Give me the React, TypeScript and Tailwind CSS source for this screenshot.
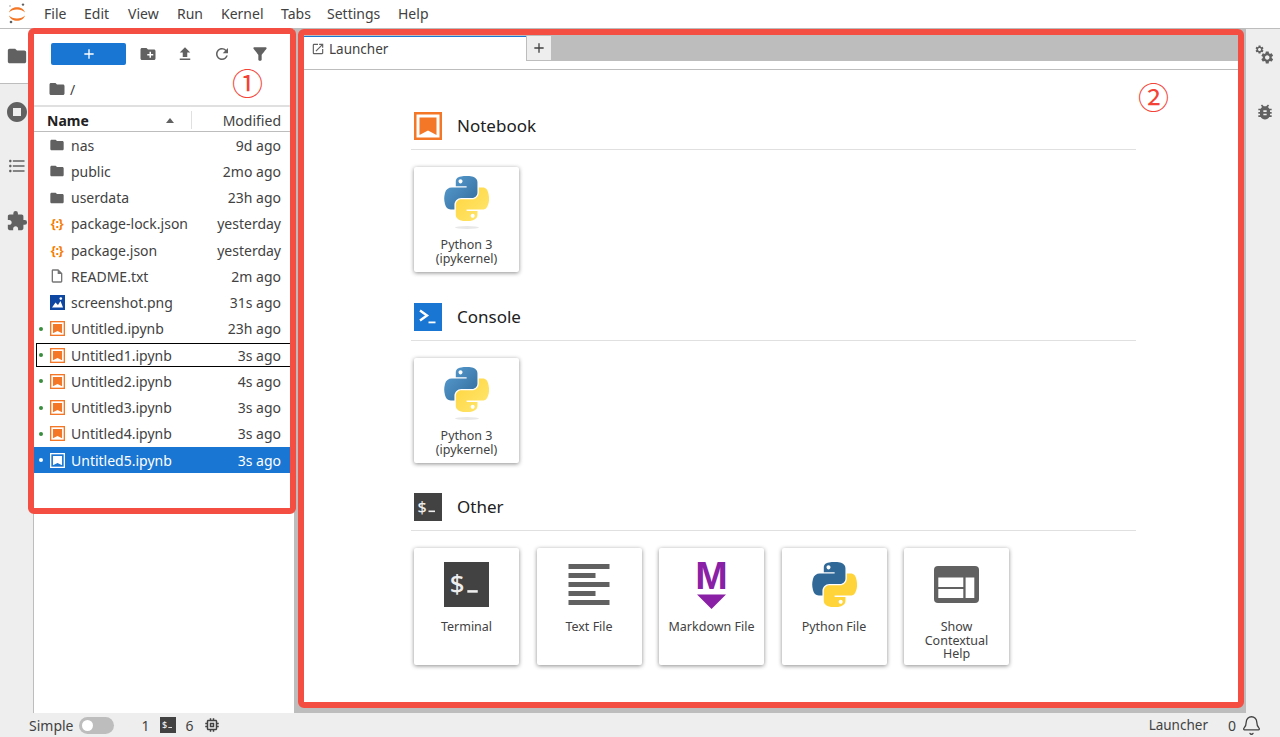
import * as React from "react"
import { Bell } from "lucide-react"
import {
    MdFolder,
    MdCreateNewFolder,
    MdFileUpload,
    MdRefresh,
    MdFilterAlt,
    MdStopCircle,
    MdFormatListBulleted,
    MdExtension,
    MdBugReport,
    MdOutlineInsertDriveFile,
    MdOutlineMemory,
    MdOutlineOpenInNew,
    MdAdd,
} from "react-icons/md"

const menuItems = [
    { label: "File", className: "w-[40px]" },
    { label: "Edit", className: "w-[44px]" },
    { label: "View", className: "w-[49px]" },
    { label: "Run", className: "w-[44px]" },
    { label: "Kernel", className: "w-[60px]" },
    { label: "Tabs", className: "w-[46px]" },
    { label: "Settings", className: "w-[71px]" },
    { label: "Help", className: "w-[40px]" },
]

type FileKind = "folder" | "json" | "text" | "image" | "notebook"

interface FileRow {
    name: string
    modified: string
    kind: FileKind
    running?: boolean
    focused?: boolean
    selected?: boolean
}

const files: FileRow[] = [
    { name: "nas", modified: "9d ago", kind: "folder" },
    { name: "public", modified: "2mo ago", kind: "folder" },
    { name: "userdata", modified: "23h ago", kind: "folder" },
    { name: "package-lock.json", modified: "yesterday", kind: "json" },
    { name: "package.json", modified: "yesterday", kind: "json" },
    { name: "README.txt", modified: "2m ago", kind: "text" },
    { name: "screenshot.png", modified: "31s ago", kind: "image" },
    { name: "Untitled.ipynb", modified: "23h ago", kind: "notebook", running: true },
    { name: "Untitled1.ipynb", modified: "3s ago", kind: "notebook", running: true, focused: true },
    { name: "Untitled2.ipynb", modified: "4s ago", kind: "notebook", running: true },
    { name: "Untitled3.ipynb", modified: "3s ago", kind: "notebook", running: true },
    { name: "Untitled4.ipynb", modified: "3s ago", kind: "notebook", running: true },
    { name: "Untitled5.ipynb", modified: "3s ago", kind: "notebook", running: true, selected: true },
]

const PY_BLUE =
    "M54.9 0C50.3 0 46 .4 42.1 1.1 30.8 3.1 28.7 7.3 28.7 15v10.2h26.8v3.4H18.6c-7.8 0-14.6 4.7-16.7 13.6-2.5 10.2-2.6 16.6 0 27.3 1.9 7.9 6.5 13.6 14.2 13.6h9.2V71c0-8.8 7.7-16.7 16.8-16.7h26.8c7.5 0 13.4-6.1 13.4-13.6V15.2c0-7.3-6.1-12.7-13.4-13.9C64.3.3 59.5 0 54.9 0Zm-14.5 8.2c2.8 0 5 2.3 5 5.1s-2.3 5.1-5 5.1-5-2.3-5-5.1 2.2-5.1 5-5.1Z"
const PY_YELLOW =
    "M85.6 28.7v11.9c0 9.2-7.8 17-16.7 17H42.1c-7.3 0-13.4 6.3-13.4 13.6v25.5c0 7.3 6.3 11.5 13.4 13.6 8.5 2.5 16.6 2.9 26.8 0 6.8-2 13.4-5.9 13.4-13.6V86.5H55.5v-3.4h40.2c7.8 0 10.7-5.4 13.4-13.6 2.8-8.4 2.7-16.5 0-27.3-1.9-7.8-5.6-13.6-13.4-13.6Zm-15.1 64.6c2.8 0 5 2.3 5 5.1s-2.3 5.1-5 5.1-5-2.3-5-5.1 2.3-5.1 5-5.1Z"
const GEAR =
    "M19.14 12.94c.04-.3.06-.61.06-.94 0-.32-.02-.64-.07-.94l2.03-1.58c.18-.14.23-.41.12-.61l-1.92-3.32c-.12-.22-.37-.29-.59-.22l-2.39.96c-.5-.38-1.03-.7-1.62-.94L14.4 2.81c-.04-.24-.24-.41-.48-.41h-3.84c-.24 0-.43.17-.47.41L9.25 5.35c-.59.24-1.13.57-1.62.94l-2.39-.96c-.22-.08-.47 0-.59.22L2.74 8.87c-.12.21-.08.47.12.61l2.03 1.58c-.05.3-.09.63-.09.94s.02.64.07.94l-2.03 1.58c-.18.14-.23.41-.12.61l1.92 3.32c.12.22.37.29.59.22l2.39-.96c.5.38 1.03.7 1.62.94l.36 2.54c.05.24.24.41.48.41h3.84c.24 0 .44-.17.47-.41l.36-2.54c.59-.24 1.13-.56 1.62-.94l2.39.96c.22.08.47 0 .59-.22l1.92-3.32c.12-.22.07-.47-.12-.61l-2.01-1.58ZM12 15.6c-1.98 0-3.6-1.62-3.6-3.6s1.62-3.6 3.6-3.6 3.6 1.62 3.6 3.6-1.62 3.6-3.6 3.6Z"

const PythonLogo = ({ gradient, id }: { gradient?: boolean; id: string }) => (
    <svg viewBox="0 0 110.4 111.4" className="h-[45px] w-[45px]">
        {gradient && (
            <defs>
                <linearGradient id={`${id}-b`} x1="0" y1="0" x2="1" y2="1">
                    <stop offset="0" stopColor="#5a9fd4" />
                    <stop offset="1" stopColor="#306998" />
                </linearGradient>
                <linearGradient id={`${id}-y`} x1="1" y1="1" x2="0" y2="0">
                    <stop offset="0" stopColor="#ffe873" />
                    <stop offset="1" stopColor="#ffd43b" />
                </linearGradient>
            </defs>
        )}
        <path d={PY_BLUE} fill={gradient ? `url(#${id}-b)` : "#306998"} />
        <path d={PY_YELLOW} fill={gradient ? `url(#${id}-y)` : "#ffd43b"} />
    </svg>
)

const NotebookIcon = ({ className, selected }: { className: string; selected?: boolean }) => (
    <svg viewBox="0 0 28 28" className={className}>
        <rect
            x="1.25"
            y="1.25"
            width="25.5"
            height="25.5"
            fill={selected ? "#1976d2" : "#fff"}
            stroke={selected ? "#fff" : "#f37726"}
            strokeWidth="2.5"
        />
        <path d="M5.5 5.5H22.5V23L14 18.5L5.5 23Z" fill={selected ? "#fff" : "#f37726"} />
    </svg>
)

const TerminalIcon = ({ className }: { className: string }) => (
    <svg viewBox="0 0 28 28" className={className}>
        <rect width="28" height="28" fill="#424242" />
        <text x="3.5" y="19.5" fontSize="16" fontWeight="500" fill="#eeeeee" fontFamily="Noto Sans, sans-serif">
            $
        </text>
        <rect x="14.5" y="17.5" width="6.5" height="1.6" fill="#eeeeee" />
    </svg>
)

const ConsoleIcon = () => (
    <svg viewBox="0 0 28 28" className="h-[28px] w-[28px]">
        <rect width="28" height="28" fill="#1976d2" />
        <path d="M6 7.5L13 12.5L6 17.5" fill="none" stroke="#fff" strokeWidth="2.4" />
        <rect x="14.5" y="18.5" width="7" height="1.8" fill="#fff" />
    </svg>
)

const TextFileIcon = () => (
    <svg viewBox="0 0 45 45" className="h-[45px] w-[45px]">
        <g fill="#616161">
            <rect x="1.5" y="2" width="41" height="5" />
            <rect x="1.5" y="11" width="27" height="5" />
            <rect x="1.5" y="20" width="41" height="5" />
            <rect x="1.5" y="29" width="27" height="5" />
            <rect x="1.5" y="38" width="41" height="5" />
        </g>
    </svg>
)

const MarkdownIcon = () => (
    <svg viewBox="0 0 45 50" className="h-[50px] w-[45px] overflow-visible">
        <text
            x="22.5"
            y="29"
            textAnchor="middle"
            fontSize="39"
            fontWeight="700"
            fill="#8a20a6"
            fontFamily="Liberation Sans, sans-serif"
        >
            M
        </text>
        <path d="M8 34.5H37L22.5 49Z" fill="#8a20a6" />
    </svg>
)

const HelpIcon = () => (
    <svg viewBox="0 0 45 45" className="h-[45px] w-[45px]">
        <rect y="4" width="45" height="37" rx="4" fill="#616161" />
        <rect x="4.3" y="15.5" width="25" height="9.5" fill="#fff" />
        <rect x="4.3" y="27" width="25" height="9" fill="#fff" />
        <rect x="31.6" y="15.5" width="8.7" height="20.5" fill="#fff" />
    </svg>
)

const ImageIcon = () => (
    <svg viewBox="0 0 15 15" className="h-[15px] w-[15px]">
        <rect width="15" height="15" fill="#0d47a1" />
        <path d="M2 12.5L5.5 7.5L8 10L10.5 6L13 12.5Z" fill="#fff" />
        <circle cx="10.8" cy="3.6" r="1.3" fill="#fff" />
    </svg>
)

const JupyterLogo = () => (
    <svg viewBox="0 0 22 22" className="h-[22px] w-[22px]">
        <path d="M3 9.5C5 2.5 17 2.5 19 9.5C15.5 5.5 6.5 5.5 3 9.5Z" fill="#f37726" />
        <path d="M3 12.5C5 19.5 17 19.5 19 12.5C15.5 16.5 6.5 16.5 3 12.5Z" fill="#f37726" />
        <circle cx="17" cy="1.6" r="1.2" fill="#616161" />
        <circle cx="4" cy="3" r="0.8" fill="#9e9e9e" />
        <circle cx="5" cy="19" r="1.3" fill="#616161" />
    </svg>
)

const GearsIcon = () => (
    <svg viewBox="0 0 20 20" className="h-[20px] w-[20px]">
        <g fill="#616161">
            <path d={GEAR} transform="translate(-0.5 -0.5) scale(0.42)" />
            <path d={GEAR} transform="translate(4.8 5) scale(0.62)" />
        </g>
    </svg>
)

const JsonIcon = () => (
    <span className="flex h-[15px] w-[16px] items-center justify-center text-[13px] leading-none font-bold tracking-[-0.5px] text-[#f57c00]">
        {"{:}"}
    </span>
)

const RowIcon = ({ file }: { file: FileRow }) => {
    switch (file.kind) {
        case "folder":
            return <MdFolder className="text-[#616161]" size={18} />
        case "json":
            return <JsonIcon />
        case "text":
            return <MdOutlineInsertDriveFile className="text-[#757575]" size={18} />
        case "image":
            return <ImageIcon />
        default:
            return <NotebookIcon className="h-[15px] w-[15px]" selected={file.selected} />
    }
}

const FileListRow = ({ file }: { file: FileRow }) => (
    <div
        className={`relative flex h-[26.25px] items-center pr-[13px] text-[14px] ${
            file.selected ? "bg-[#1976d2] text-white" : "text-[#424242]"
        }`}
    >
        {file.focused && (
            <span className="absolute inset-x-[2px] inset-y-[1px] right-0 border-[1.5px] border-black" />
        )}
        <span className="flex w-[9px] justify-end">
            {file.running && (
                <span
                    className={`h-[4px] w-[4px] rounded-full ${file.selected ? "bg-white" : "bg-[#388e3c]"}`}
                />
            )}
        </span>
        <span className="flex w-[22px] justify-center pl-[6px]">
            <RowIcon file={file} />
        </span>
        <span className="ml-[6px] flex-1">{file.name}</span>
        <span className="text-right">{file.modified}</span>
    </div>
)

const Sidebar = () => (
    <div className="flex w-[260px] flex-col bg-white">
        {/* Toolbar */}
        <div className="flex h-[50px] items-center pl-[17px]">
            <button className="flex h-[22px] w-[75px] items-center justify-center rounded-[2px] bg-[#1976d2] text-white">
                <MdAdd size={16} />
            </button>
            <div className="ml-[13px] flex items-center gap-[19px] text-[#616161]">
                <MdCreateNewFolder size={18} />
                <MdFileUpload size={18} />
                <MdRefresh size={18} />
                <MdFilterAlt size={20} />
            </div>
        </div>
        {/* Breadcrumb */}
        <div className="flex h-[28px] items-center border-b-2 border-[#e0e0e0] pb-[6px] pl-[14px] text-[14px] text-[#424242]">
            <MdFolder className="text-[#616161]" size={18} />
            <span className="ml-[4px]">/</span>
        </div>
        {/* Header */}
        <div className="flex h-[25px] items-center border-b border-[#bdbdbd] pr-[13px] pt-[2px] text-[14px] text-[#424242]">
            <span className="ml-[13px] w-[119px] font-bold text-[#212121]">Name</span>
            <span className="h-0 w-0 border-x-[4px] border-b-[5px] border-x-transparent border-b-[#616161]" />
            <span className="ml-[17px] h-[18px] w-px bg-[#e0e0e0]" />
            <span className="flex-1 text-right">Modified</span>
        </div>
        <div>
            {files.map((file) => (
                <FileListRow key={file.name} file={file} />
            ))}
        </div>
    </div>
)

const LauncherCard = ({
    icon,
    label,
    kernel,
}: {
    icon: React.ReactNode
    label: React.ReactNode
    kernel?: boolean
}) => (
    <div
        className={`flex w-[105px] flex-col items-center rounded-[2px] bg-white text-center text-[12.5px] leading-[13.5px] text-[#424242] shadow-[0_1px_4px_rgba(0,0,0,0.45)] ${
            kernel ? "h-[105px] pt-[9px]" : "h-[117px] pt-[14px]"
        }`}
    >
        <div className="flex h-[45px] items-center justify-center">{icon}</div>
        {kernel && <span className="mt-[5px] h-[3px] w-[24px] rounded-[50%] bg-[#e8e8e8]" />}
        <div className={kernel ? "mt-[9px]" : "mt-[13px]"}>{label}</div>
    </div>
)

const LauncherSection = ({
    icon,
    title,
    className,
    children,
}: {
    icon: React.ReactNode
    title: string
    className?: string
    children: React.ReactNode
}) => (
    <section className={className}>
        <div className="flex h-[38px] items-start border-b border-[#e0e0e0] pl-[3px]">
            {icon}
            <span className="ml-[15px] text-[17px] leading-[28px] text-[#212121]">{title}</span>
        </div>
        <div className="mt-[17px] flex gap-[17.5px] pl-[3px]">{children}</div>
    </section>
)

const Launcher = () => (
    <div className="flex min-w-0 flex-1 flex-col bg-white">
        {/* Tab bar */}
        <div className="flex h-[34px] shrink-0 items-start border-b border-[#bdbdbd] bg-white">
            <div className="flex h-[25px] w-[223px] items-center gap-[4px] border-t border-[#1976d2] pl-[8px] text-[13.5px] text-[#424242]">
                <MdOutlineOpenInNew className="text-[#616161]" size={14} />
                <span>Launcher</span>
            </div>
            <div className="flex h-[25px] w-[26px] items-center justify-center border border-t-0 border-[#bdbdbd] bg-[#eeeeee] text-[#424242]">
                <MdAdd size={16} />
            </div>
            <div className="h-[25px] flex-1 bg-[#bdbdbd]" />
        </div>
        <div className="ml-[108px] w-[725px] pt-[42px]">
            <LauncherSection icon={<NotebookIcon className="h-[28px] w-[28px]" />} title="Notebook">
                <LauncherCard
                    kernel
                    icon={<PythonLogo gradient id="nb" />}
                    label={
                        <>
                            Python 3
                            <br />
                            (ipykernel)
                        </>
                    }
                />
            </LauncherSection>
            <LauncherSection className="mt-[31px]" icon={<ConsoleIcon />} title="Console">
                <LauncherCard
                    kernel
                    icon={<PythonLogo gradient id="con" />}
                    label={
                        <>
                            Python 3
                            <br />
                            (ipykernel)
                        </>
                    }
                />
            </LauncherSection>
            <LauncherSection
                className="mt-[30px]"
                icon={<TerminalIcon className="h-[28px] w-[28px]" />}
                title="Other"
            >
                <LauncherCard icon={<TerminalIcon className="h-[45px] w-[45px]" />} label="Terminal" />
                <LauncherCard icon={<TextFileIcon />} label="Text File" />
                <LauncherCard icon={<MarkdownIcon />} label="Markdown File" />
                <LauncherCard icon={<PythonLogo id="file" />} label="Python File" />
                <LauncherCard
                    icon={<HelpIcon />}
                    label={
                        <>
                            Show
                            <br />
                            Contextual
                            <br />
                            Help
                        </>
                    }
                />
            </LauncherSection>
        </div>
    </div>
)

export default function App() {
    return (
        <div className="relative flex h-[737px] w-[1280px] flex-col overflow-hidden bg-[#eeeeee] font-['Noto_Sans',sans-serif]">
            {/* Menu bar */}
            <div className="flex h-[29px] shrink-0 items-center border-b border-[#bdbdbd] bg-white pb-[1px]">
                <div className="flex w-[34px] justify-center">
                    <JupyterLogo />
                </div>
                <div className="flex text-[14px] text-[#424242]">
                    {menuItems.map((item) => (
                        <span key={item.label} className={`pl-[10px] ${item.className}`}>
                            {item.label}
                        </span>
                    ))}
                </div>
            </div>

            <div className="flex min-h-0 flex-1">
                {/* Left activity bar */}
                <div className="flex w-[34px] shrink-0 flex-col items-stretch border-r border-[#bdbdbd] text-[#616161]">
                    <div className="flex h-[55px] items-center justify-center border-b border-[#bdbdbd] bg-white">
                        <MdFolder size={22} />
                    </div>
                    <div className="flex h-[55px] items-center justify-center">
                        <MdStopCircle size={24} />
                    </div>
                    <div className="flex h-[54px] items-center justify-center">
                        <MdFormatListBulleted size={20} />
                    </div>
                    <div className="flex h-[55px] items-center justify-center">
                        <MdExtension size={22} />
                    </div>
                </div>

                <Sidebar />

                {/* Main dock */}
                <div className="flex min-w-0 flex-1 bg-[#bdbdbd] pb-[9px] pl-[9px] pr-[6px] pt-[7px]">
                    <Launcher />
                </div>

                {/* Right activity bar */}
                <div className="flex w-[34px] shrink-0 flex-col items-center pl-[4px] text-[#616161]">
                    <div className="flex h-[36px] items-end justify-center">
                        <GearsIcon />
                    </div>
                    <div className="mt-[37px] flex justify-center">
                        <MdBugReport size={20} />
                    </div>
                </div>
            </div>

            {/* Status bar */}
            <div className="flex h-[24px] shrink-0 items-center text-[14px] text-[#424242]">
                <span className="ml-[29px]">Simple</span>
                <span className="ml-[5px] flex h-[17px] w-[35px] items-center rounded-full bg-[#bdbdbd] pl-[3px]">
                    <span className="h-[11px] w-[11px] rounded-full bg-white" />
                </span>
                <span className="ml-[28px]">1</span>
                <TerminalIcon className="ml-[10px] h-[16px] w-[16px]" />
                <span className="ml-[10px]">6</span>
                <MdOutlineMemory className="ml-[9px]" size={18} />
                <span className="ml-auto text-[13.5px]">Launcher</span>
                <span className="ml-[20px]">0</span>
                <Bell className="ml-[5px] mr-[18px]" size={21} strokeWidth={1.5} />
            </div>

            {/* Red annotations over the screenshot */}
            <div className="pointer-events-none absolute left-[28px] top-[28px] h-[486px] w-[268px] rounded-[6px] border-[6px] border-[#f44e42]" />
            <div className="pointer-events-none absolute left-[298px] top-[29px] h-[679px] w-[946px] rounded-[6px] border-[6px] border-[#f44e42]" />
            <span className="absolute left-[232px] top-[62px] font-['Noto_Sans_CJK_SC',sans-serif] text-[31px] leading-[40px] text-[#f44336]">
                ①
            </span>
            <span className="absolute left-[1138px] top-[76px] font-['Noto_Sans_CJK_SC',sans-serif] text-[31px] leading-[40px] text-[#f44336]">
                ②
            </span>
        </div>
    )
}
